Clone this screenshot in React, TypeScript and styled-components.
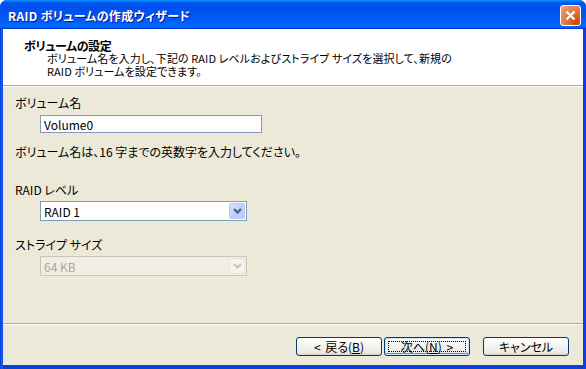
import React from "react";
import styled, { createGlobalStyle } from "styled-components";

const GlobalStyle = createGlobalStyle`
  html, body {
    margin: 0;
    padding: 0;
    background: #ffffff;
  }
  body {
    font-family: "Noto Sans CJK JP", "Noto Sans", sans-serif;
    font-feature-settings: "palt";
    font-size: 12px;
    color: #000000;
  }
`;

const Window = styled.div`
  width: 586px;
  height: 369px;
  display: flex;
  flex-direction: column;
  border-radius: 7px 7px 0 0;
  overflow: hidden;
  background: linear-gradient(to right, #0831d9 0, #166aee 2px, #0842d8 3px, #0842d8 calc(100% - 3px), #0b3ee0 100%);
  box-sizing: border-box;
`;

const TitleBar = styled.div`
  height: 29px;
  flex: none;
  display: flex;
  align-items: center;
  justify-content: space-between;
  padding: 0 5px 0 8px;
  background: linear-gradient(
    to bottom,
    #0997ff 0%,
    #0053ee 10%,
    #0050ee 40%,
    #0066ff 88%,
    #0066ff 93%,
    #005bff 95%,
    #003dd7 97%,
    #003dd7 100%
  );
`;

const Title = styled.span`
  color: #ffffff;
  font-weight: bold;
  font-size: 12px;
  letter-spacing: 0.3px;
  text-shadow: 1px 1px #0f1089;
  margin-top: 1px;
`;

const CloseButton = styled.div`
  width: 21px;
  height: 21px;
  box-sizing: border-box;
  border: 1px solid #ffffff;
  border-radius: 3px;
  background: radial-gradient(circle at 85% 85%, #cc4600 0%, #dc6527 30%, #e38b5e 70%, #f0a283 100%);
  display: flex;
  align-items: center;
  justify-content: center;
  margin-top: 1px;
`;

const Frame = styled.div`
  flex: 1;
  display: flex;
  flex-direction: column;
  margin: 0 3px 4px 3px;
  background: #ece9d8;
`;

const Header = styled.div`
  height: 57px;
  flex: none;
  box-sizing: border-box;
  background: #ffffff;
  padding: 10px 0 0 21px;
  border-bottom: 1px solid #aca899;
  box-shadow: 0 1px 0 #ffffff;
`;

const HeaderTitle = styled.div`
  font-weight: bold;
  line-height: 13px;
  letter-spacing: -0.4px;
`;

const HeaderLine = styled.div`
  margin-left: 23px;
  line-height: 13px;
  font-size: 11px;
  letter-spacing: 0.1px;
  white-space: nowrap;
`;

const Body = styled.div`
  flex: 1;
  padding: 10px 0 0 12px;
  line-height: 13px;
`;

const Label = styled.div<{ $gap: number }>`
  margin-top: ${(p) => p.$gap}px;
  height: 13px;
`;

const TextBox = styled.div`
  width: 222px;
  height: 18px;
  box-sizing: border-box;
  margin: 6px 0 0 25px;
  border: 1px solid #7f9db9;
  background: #ffffff;
  padding-left: 3px;
  display: flex;
  align-items: center;
`;

const Select = styled.div<{ $disabled?: boolean }>`
  width: 207px;
  height: 20px;
  box-sizing: border-box;
  margin: 5px 0 0 25px;
  border: 1px solid ${(p) => (p.$disabled ? "#c9c7ba" : "#7f9db9")};
  background: ${(p) => (p.$disabled ? "#f0eee3" : "#ffffff")};
  color: ${(p) => (p.$disabled ? "#aca899" : "#000000")};
  display: flex;
  align-items: center;
  justify-content: space-between;
  padding: 0 1px 0 3px;
`;

const DropButton = styled.div<{ $disabled?: boolean }>`
  width: 16px;
  height: 16px;
  box-sizing: border-box;
  border: 1px solid ${(p) => (p.$disabled ? "#e8e6dc" : "#b9cbf3")};
  border-radius: 2px;
  background: ${(p) =>
    p.$disabled
      ? "#f4f3ee"
      : "linear-gradient(to bottom right, #d7e3fd 0%, #c1d3fb 45%, #b3c8f5 100%)"};
  display: flex;
  align-items: center;
  justify-content: center;
`;

const Footer = styled.div`
  height: 42px;
  flex: none;
  box-sizing: border-box;
  border-top: 1px solid #aca899;
  box-shadow: inset 0 1px 0 #ffffff;
  display: flex;
  justify-content: flex-end;
  align-items: flex-start;
  padding: 13px 14px 0 0;
`;

const Button = styled.div<{ $default?: boolean; $gap?: number }>`
  width: 86px;
  height: 19px;
  box-sizing: border-box;
  margin-left: ${(p) => p.$gap ?? 0}px;
  border: 1px solid #003c74;
  border-radius: 3px;
  background: linear-gradient(to bottom, #ffffff 0%, #f4f4f0 45%, #ecebe6 85%, #d6d0c5 100%);
  box-shadow: ${(p) =>
    p.$default ? "inset 0 0 0 1px #cee7ff, inset 0 -1px 0 1px #6982ee" : "none"};
  display: flex;
  align-items: center;
  justify-content: center;
  line-height: 13px;
  word-spacing: 2px;
  position: relative;
`;

const FocusRing = styled.span`
  position: absolute;
  inset: 3px;
  border: 1px dotted #000000;
`;

const Chevron = ({ color }: { color: string }) => (
  <svg width="9" height="6" viewBox="0 0 9 6">
    <path d="M1 1 L4.5 4.5 L8 1" fill="none" stroke={color} strokeWidth="2.2" />
  </svg>
);

export default function App() {
  return (
    <>
      <GlobalStyle />
      <Window>
        <TitleBar>
          <Title>RAID ボリュームの作成ウィザード</Title>
          <CloseButton>
            <svg width="11" height="11" viewBox="0 0 11 11">
              <path d="M1.5 1.5 L9.5 9.5 M9.5 1.5 L1.5 9.5" stroke="#ffffff" strokeWidth="2.2" />
            </svg>
          </CloseButton>
        </TitleBar>
        <Frame>
          <Header>
            <HeaderTitle>ボリュームの設定</HeaderTitle>
            <HeaderLine>ボリューム名を入力し、下記の RAID レベルおよびストライプ サイズを選択して、新規の</HeaderLine>
            <HeaderLine>RAID ボリュームを設定できます。</HeaderLine>
          </Header>
          <Body>
            <Label $gap={0}>ボリューム名</Label>
            <TextBox>Volume0</TextBox>
            <Label $gap={12}>ボリューム名は、16 字までの英数字を入力してください。</Label>
            <Label $gap={25}>RAID レベル</Label>
            <Select>
              <span>RAID 1</span>
              <DropButton>
                <Chevron color="#4d6185" />
              </DropButton>
            </Select>
            <Label $gap={17}>ストライプ サイズ</Label>
            <Select $disabled>
              <span>64 KB</span>
              <DropButton $disabled>
                <Chevron color="#c9c7ba" />
              </DropButton>
            </Select>
          </Body>
          <Footer>
            <Button>
              &lt; 戻る(<u>B</u>)
            </Button>
            <Button $default $gap={2}>
              <FocusRing />
              次へ(<u>N</u>) &gt;
            </Button>
            <Button $gap={13}>キャンセル</Button>
          </Footer>
        </Frame>
      </Window>
    </>
  );
}
